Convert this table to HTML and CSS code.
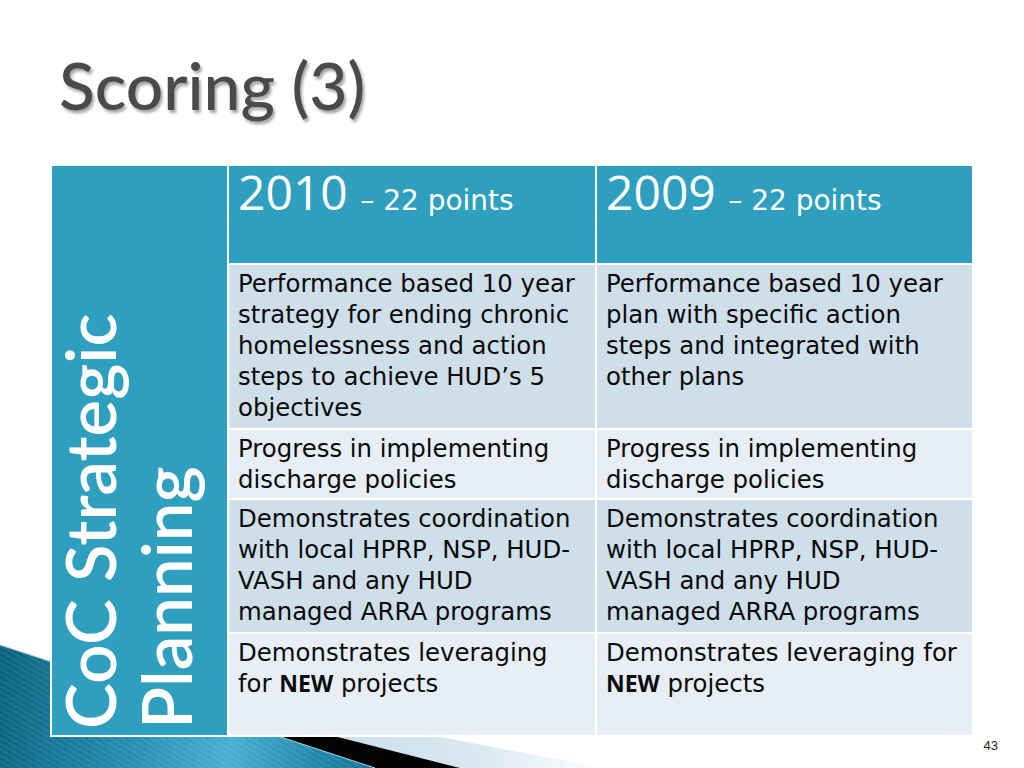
FILE: index.html
```html
<!DOCTYPE html>
<html lang="en">
<head>
<meta charset="utf-8">
<title>Scoring (3)</title>
<link rel="stylesheet" href="styles.css">
</head>
<body>
<div class="slide">
  <svg class="swoosh" width="700" height="138" viewBox="0 630 700 138" aria-hidden="true">
    <defs>
      <linearGradient id="tealGrad" gradientUnits="userSpaceOnUse" x1="0" y1="700" x2="373" y2="760">
        <stop offset="0" stop-color="#0a6480"/>
        <stop offset="0.4" stop-color="#2a92b6"/>
        <stop offset="0.62" stop-color="#48afd2"/>
        <stop offset="0.85" stop-color="#2089ab"/>
        <stop offset="1" stop-color="#127494"/>
      </linearGradient>
      <linearGradient id="paleGrad" gradientUnits="userSpaceOnUse" x1="300" y1="0" x2="610" y2="0">
        <stop offset="0" stop-color="#c6dde9"/>
        <stop offset="0.6" stop-color="#dbe9f1"/>
        <stop offset="1" stop-color="#ffffff"/>
      </linearGradient>
      <pattern id="stripes" width="5" height="5" patternUnits="userSpaceOnUse" patternTransform="rotate(-60)">
        <rect width="2" height="5" fill="#ffffff" opacity="0.07"/>
      </pattern>
    </defs>
    <polygon points="17,656 603,768 460,768" fill="url(#paleGrad)"/>
    <polygon points="97,676 460,768 375,768" fill="#020202"/>
    <polygon points="0,645 375,768 0,768" fill="url(#tealGrad)"/>
    <polygon points="0,645 375,768 0,768" fill="url(#stripes)"/>
    <line x1="0" y1="645" x2="375" y2="768" stroke="#9ccadb" stroke-width="1"/>
  </svg>

  <h1 class="title">Scoring (3)</h1>

  <div class="grid">
    <div class="side"><span class="side-text">CoC Strategic<br>Planning</span></div>

    <div class="head"><span class="year">2010</span> <span class="pts">– 22 points</span></div>
    <div class="head"><span class="year">2009</span> <span class="pts">– 22 points</span></div>

    <div class="cell dark">Performance based 10 year<br>strategy for ending chronic<br>homelessness and action<br>steps to achieve HUD’s 5<br>objectives</div>
    <div class="cell dark">Performance based 10 year<br>plan with specific action<br>steps and integrated with<br>other plans</div>

    <div class="cell light">Progress in implementing<br>discharge policies</div>
    <div class="cell light">Progress in implementing<br>discharge policies</div>

    <div class="cell dark">Demonstrates coordination<br>with local HPRP, NSP, HUD-<br>VASH and any HUD<br>managed ARRA programs</div>
    <div class="cell dark">Demonstrates coordination<br>with local HPRP, NSP, HUD-<br>VASH and any HUD<br>managed ARRA programs</div>

    <div class="cell light">Demonstrates leveraging<br>for <b class="new">NEW</b> projects</div>
    <div class="cell light">Demonstrates leveraging for<br><b class="new">NEW</b> projects</div>
  </div>

  <div class="pagenum">43</div>
</div>
</body>
</html>
```

FILE: styles.css
```css
html, body {
  margin: 0;
  padding: 0;
  background: #ffffff;
}

.slide {
  position: relative;
  width: 1024px;
  height: 768px;
  overflow: hidden;
  background: #ffffff;
  display: flex;
  flex-direction: column;
}

.swoosh {
  position: absolute;
  left: 0;
  bottom: 0;
  z-index: 0;
}

.title {
  position: relative;
  z-index: 1;
  margin: 45px 0 0 0;
  padding-left: 59px;
  font-family: "Lato", "Open Sans", sans-serif;
  font-weight: 500;
  font-size: 66px;
  line-height: 79px;
  height: 79px;
  color: #4a4a4a;
  text-shadow: 2px 3px 3px rgba(0, 0, 0, 0.35);
}

.grid {
  position: relative;
  z-index: 1;
  margin: 40px 0 0 50px;
  align-self: flex-start;
  display: grid;
  grid-template-columns: 175px 366px 375px;
  grid-template-rows: 97px 163px 68px 132px 101px;
  gap: 2px;
  padding: 2px;
  background: #ffffff;
}

.side {
  grid-row: 1 / 6;
  grid-column: 1;
  background: #2e9fbe;
  display: flex;
  writing-mode: vertical-rl;
  transform: rotate(180deg);
  padding: 6px 0 0 0;
  box-sizing: border-box;
}

.side-text {
  font-family: "Lato", "Open Sans", sans-serif;
  font-weight: 600;
  font-size: 69px;
  line-height: 76px;
  color: #ffffff;
  white-space: nowrap;
}

.head {
  background: #2e9fbe;
  color: #ffffff;
  padding: 0 9px;
  white-space: nowrap;
  font-family: "Open Sans", "DejaVu Sans", sans-serif;
  font-size: 48px;
  line-height: 52px;
}

.year {
  font-size: 48px;
}

.pts {
  font-family: "DejaVu Sans", sans-serif;
  font-size: 28px;
}

.cell {
  font-family: "DejaVu Sans", sans-serif;
  font-size: 24.4px;
  line-height: 31px;
  color: #0a0a0a;
  padding: 3px 9px 0 9px;
  white-space: nowrap;
}

.dark {
  background: #cfdfe9;
}

.light {
  background: #e7eef5;
}

.new {
  font-family: "Open Sans", "DejaVu Sans", sans-serif;
  font-weight: 700;
  font-size: 23px;
}

.pagenum {
  position: relative;
  z-index: 1;
  align-self: flex-end;
  margin-top: 1px;
  padding-right: 26px;
  font-family: "Liberation Sans", Arial, sans-serif;
  font-size: 13px;
  line-height: 15px;
  color: #222222;
}
```
